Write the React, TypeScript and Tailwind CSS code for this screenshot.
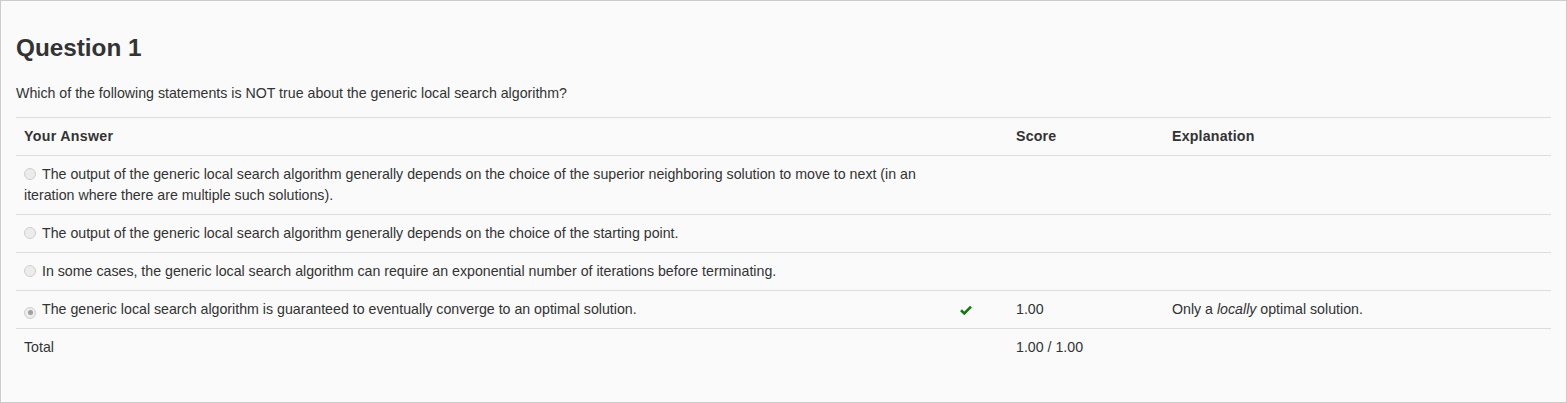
import React from "react";

type Option = {
  text: string;
  checked?: boolean;
  correct?: boolean;
  score?: string;
  explanation?: React.ReactNode;
};

const options: Option[] = [
  {
    text: "The output of the generic local search algorithm generally depends on the choice of the superior neighboring solution to move to next (in an iteration where there are multiple such solutions).",
  },
  { text: "The output of the generic local search algorithm generally depends on the choice of the starting point." },
  { text: "In some cases, the generic local search algorithm can require an exponential number of iterations before terminating." },
  {
    text: "The generic local search algorithm is guaranteed to eventually converge to an optimal solution.",
    checked: true,
    correct: true,
    score: "1.00",
    explanation: (
      <>
        Only a <em>locally</em> optimal solution.
      </>
    ),
  },
];

function Radio({ checked }: { checked?: boolean }) {
  return (
    <span className="inline-flex items-center justify-center w-3 h-3 mr-[6px] rounded-full border border-[#cfcfcf] bg-[#ececec] align-[-1px]">
      {checked && <span className="w-[5px] h-[5px] rounded-full bg-[#a0a0a0]" />}
    </span>
  );
}

function CheckIcon() {
  return (
    <svg width="12" height="10" viewBox="0 0 12 10" className="inline-block align-[-1px]">
      <path d="M1 5.2 L4.3 8.4 L11 1.6" fill="none" stroke="#0a7d0a" strokeWidth="2.6" strokeLinejoin="miter" />
    </svg>
  );
}

export default function App() {
  return (
    <div
      className="w-[1567px] h-[403px] border border-[#cccccc] bg-[#fafafa] px-[15px] pt-[34px] text-[#333333] text-[14.2px] leading-[21px]"
      style={{ fontFamily: '"Liberation Sans", Arial, sans-serif' }}
    >
      <h2 className="text-[24.3px] leading-[26px] font-bold">Question 1</h2>
      <p className="mt-[22px]">Which of the following statements is NOT true about the generic local search algorithm?</p>

      <table className="mt-[13px] w-[1535px] table-fixed border-collapse">
        <colgroup>
          <col className="w-[936px]" />
          <col className="w-[56px]" />
          <col className="w-[156px]" />
          <col className="w-[387px]" />
        </colgroup>
        <thead>
          <tr className="border-t border-[#dddddd]">
            <th className="p-2 text-left font-bold tracking-[0.3px]">Your Answer</th>
            <th className="p-2" />
            <th className="p-2 text-left font-bold tracking-[0.2px]">Score</th>
            <th className="p-2 text-left font-bold tracking-[0.2px]">Explanation</th>
          </tr>
        </thead>
        <tbody>
          {options.map((o, i) => (
            <tr key={i} className="border-t border-[#dddddd] align-top">
              <td className="p-2">
                <Radio checked={o.checked} />
                {o.text}
              </td>
              <td className="p-2">{o.correct && <CheckIcon />}</td>
              <td className="p-2">{o.score}</td>
              <td className="p-2">{o.explanation}</td>
            </tr>
          ))}
          <tr className="border-t border-[#dddddd]">
            <td className="p-2">Total</td>
            <td className="p-2" />
            <td className="p-2">1.00 / 1.00</td>
            <td className="p-2" />
          </tr>
        </tbody>
      </table>
    </div>
  );
}
